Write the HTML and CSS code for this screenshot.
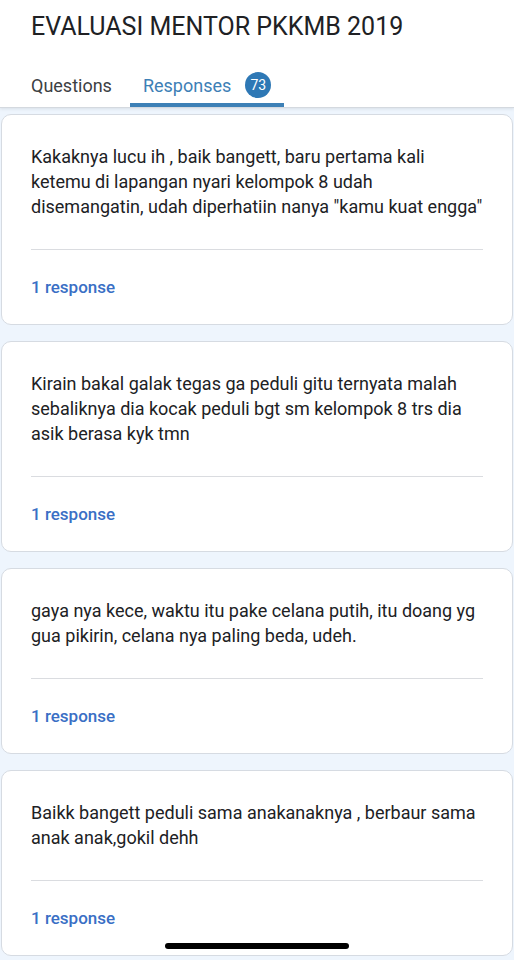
FILE: index.html
```html
<!DOCTYPE html>
<html lang="en">

<head>
  <meta charset="UTF-8" />
  <title>EVALUASI MENTOR PKKMB 2019 | Responses</title>
  <link rel="stylesheet" href="styles.css">
</head>

<body>

  <header class="form-header">
    <h1 class="form-title">EVALUASI MENTOR PKKMB 2019</h1>
    <nav class="tabs">
      <div class="tab">Questions</div>
      <div class="tab tab-active">
        Responses
        <span class="tab-badge">73</span>
      </div>
    </nav>
  </header>

  <main class="response-list">
    <div class="response-card">
      <p class="response-text">Kakaknya lucu ih , baik bangett, baru pertama kali ketemu di lapangan nyari kelompok 8 udah disemangatin, udah diperhatiin nanya "kamu kuat engga"</p>
      <hr class="response-divider">
      <div class="response-count">1 response</div>
    </div>

    <div class="response-card">
      <p class="response-text">Kirain bakal galak tegas ga peduli gitu ternyata malah sebaliknya dia kocak peduli bgt sm kelompok 8 trs dia asik berasa kyk tmn</p>
      <hr class="response-divider">
      <div class="response-count">1 response</div>
    </div>

    <div class="response-card">
      <p class="response-text">gaya nya kece, waktu itu pake celana putih, itu doang yg gua pikirin, celana nya paling beda, udeh.</p>
      <hr class="response-divider">
      <div class="response-count">1 response</div>
    </div>

    <div class="response-card">
      <p class="response-text">Baikk bangett peduli sama anakanaknya , berbaur sama anak anak,gokil dehh</p>
      <hr class="response-divider">
      <div class="response-count">1 response</div>
    </div>
  </main>

  <div class="home-indicator"></div>

</body>

</html>
```

FILE: styles.css
```css
body {
  margin: 0;
  background: #eef5fd;
  font-family: Roboto, "Liberation Sans", sans-serif;
  color: #202124;
}

.form-header {
  background: white;
  border-bottom: 1px solid #d4d9df;
  box-shadow: 0 1px 3px rgba(60, 64, 67, 0.12);
}

.form-title {
  margin: 0;
  padding: 12px 0 0 31px;
  font-size: 25px;
  font-weight: 400;
  line-height: 30px;
  color: #202124;
}

.tabs {
  display: flex;
  gap: 5px;
  padding-left: 18px;
  margin-top: 25px;
}

.tab {
  display: flex;
  align-items: center;
  padding: 0 13px;
  height: 36px;
  font-size: 18px;
  color: #3c4043;
  border-bottom: 4px solid transparent;
}

.tab-active {
  color: #3d80b6;
  border-bottom-color: #3d80b6;
  border-radius: 3px 3px 0 0;
}

.tab-badge {
  display: inline-flex;
  align-items: center;
  justify-content: center;
  width: 26px;
  height: 26px;
  margin-left: 14px;
  border-radius: 50%;
  background: #2e78b5;
  color: white;
  font-size: 14px;
}

.response-list {
  display: flex;
  flex-direction: column;
  gap: 16px;
  padding: 6px 1px 20px;
}

.response-card {
  background: white;
  border: 1px solid #d6dbe2;
  border-radius: 10px;
  padding: 29px 26px 26px 29px;
}

.response-text {
  margin: 0;
  font-size: 18px;
  line-height: 25px;
  color: #202124;
}

.response-divider {
  border: none;
  border-top: 1px solid #dadce0;
  margin: 30px 3px 0 0;
}

.response-count {
  margin-top: 26px;
  font-size: 17px;
  line-height: 22px;
  font-weight: 500;
  color: #3a6fc5;
}

.home-indicator {
  position: fixed;
  left: 165px;
  top: 943px;
  width: 184px;
  height: 6px;
  border-radius: 3px;
  background: #000;
}
```
